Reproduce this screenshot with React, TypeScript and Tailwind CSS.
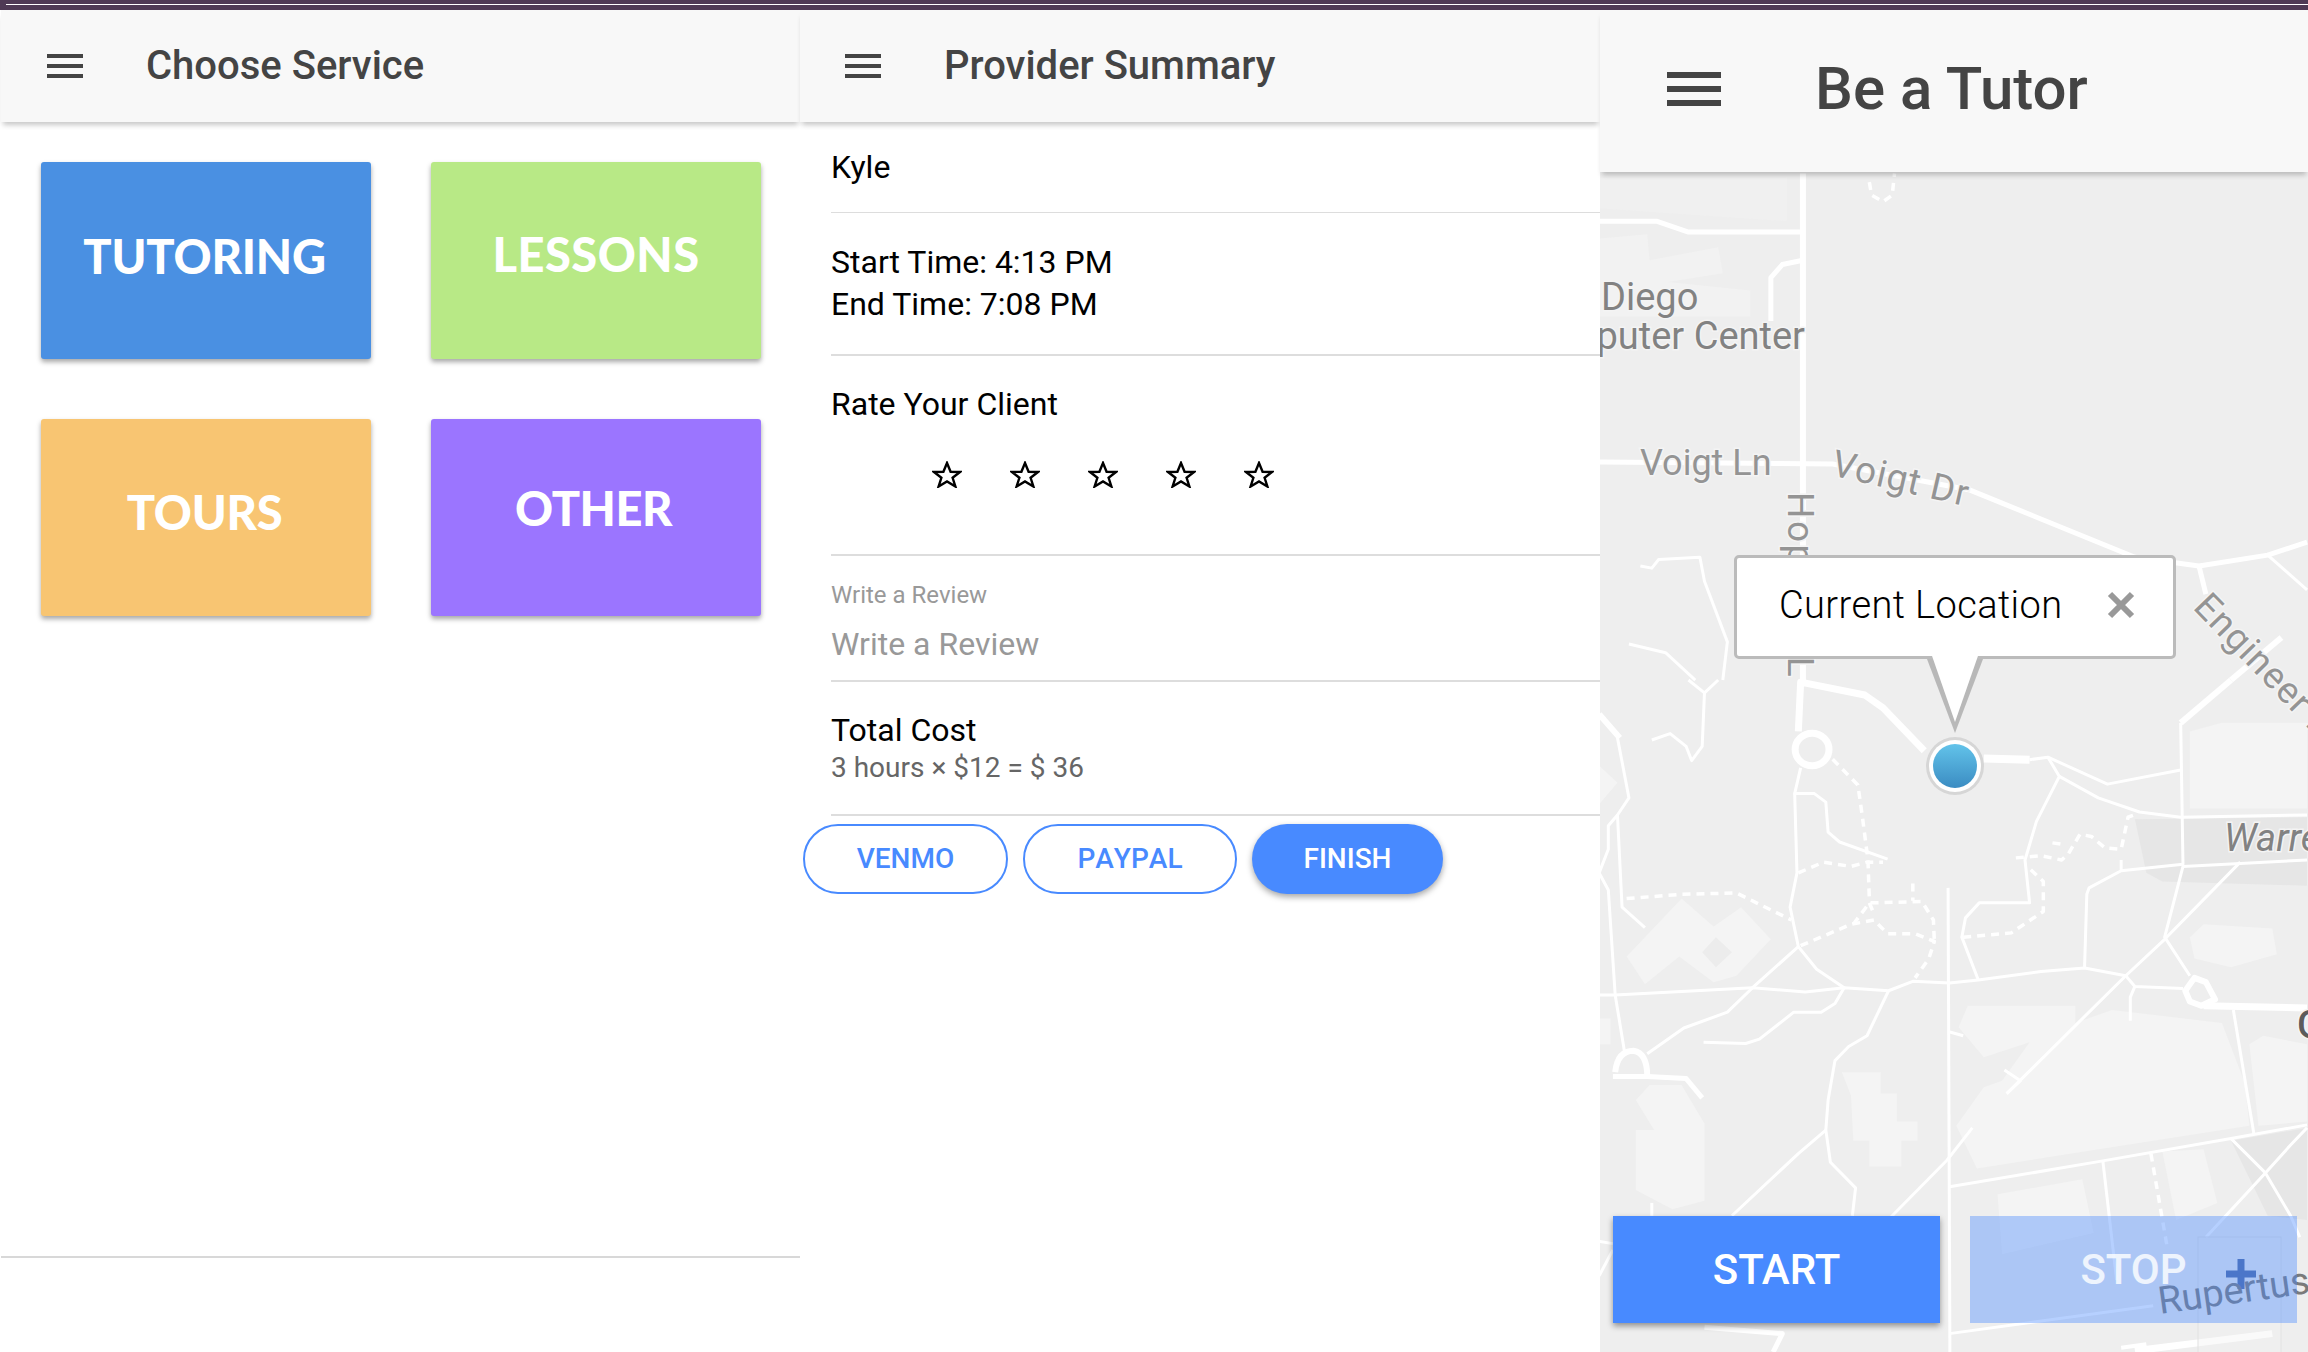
const cards = [
  { label: 'TUTORING', bg: 'bg-[#4a90e2]', nudge: 'pb-[9px] pr-[3px] tracking-[-0.2px]' },
  { label: 'LESSONS', bg: 'bg-[#b8e986]', nudge: 'pb-[13px] tracking-[0.5px]' },
  { label: 'TOURS', bg: 'bg-[#f8c572]', nudge: 'pb-[10px] pr-[3px] tracking-[-0.3px]' },
  { label: 'OTHER', bg: 'bg-[#9b75ff]', nudge: 'pb-[19px] pr-[5px] tracking-[-0.5px]' },
]

// map geometry, coordinates taken from two crops of the map
const thick: [string, number][] = [
  ['455,120 460,5 600,35 640,65 730,165', 7],
  ['860,183 960,186', 8],
  ['20,80 65,135', 6],
  ['1290,100 1400,0', 6],
  ['1340,760 1566,765', 7],
  ['50,925 125,925 210,930 245,975', 5],
  ['1190,1565 1490,1525', 7],
  ['250,1510 420,1525 400,1568', 5],
  ['1160,1558 1215,1550', 4],
]

const thin = [
  '960,186 1000,180 1130,243 1290,210',
  '1000,180 1025,225 975,330 950,420 960,520 850,520 820,555 812,600 848,700',
  '1025,225 1110,275 1200,308 1290,320 1566,315',
  '1290,100 1295,430 1160,445 1090,485 1085,500 1080,672',
  '1160,445 1160,420',
  '1566,420 1295,435 1255,600 1310,690',
  '1420,425 1255,605 1170,690 910,965',
  '1170,690 1080,672 985,680 848,700 785,707 705,703 652,725 555,718 470,728 355,718 55,735 20,735',
  '55,735 75,865',
  '60,135 85,275 60,315 70,530 120,578',
  '60,315 40,340 40,395 20,450 40,490 55,735',
  '135,140 175,125 210,155 222,188 245,155 250,30 215,0',
  '250,30 280,0',
  '445,265 490,265 515,285 520,355 545,378 650,418',
  '460,205 447,265 452,450 437,530 455,622 495,675 555,718 535,755 505,775 445,775 370,838 340,848 248,845',
  '455,622 355,718 300,775 205,812 125,872',
  '652,725 605,830 565,855 535,888 520,980 515,1050 525,1125 580,1185 573,1250',
  '515,1050 455,1105 310,1250',
  '782,485 786,1568',
  '782,820 815,830',
  '905,910 940,935 910,965',
  '835,1045 780,1120 660,1250 520,1400',
  '782,1183 1120,1122 1400,1070 1566,1038',
  '1120,1122 1150,1400',
  '1400,1070 1475,1150 1530,1250 1550,1300',
  '1566,1045 1530,1085 1475,1150 1345,1300',
  '1405,770 1450,1060',
  '1190,715 1180,740 1180,795',
  '1170,690 1190,715 1295,720',
  '785,1525 1230,1460',
  '20,1310 50,1315',
  '20,1390 50,1330',
  '135,1220 135,1250',
]

const dashed = [
  '530,185 585,245 595,320 607,420 610,510',
  '455,450 510,425 570,435 605,425 640,425',
  '80,510 200,500 320,497 440,560',
  '460,620 570,570 620,560 650,592 710,592 752,610 740,650 710,695',
  '575,570 610,520 725,517 750,560 752,610',
  '610,520 620,545',
  '705,475 705,515',
  '815,600 920,590 990,540 990,470 960,440',
  '930,415 985,410 1030,420 1045,405 1070,360 1095,365 1125,392 1160,395 1175,320 1195,312',
  '1010,380 1040,385',
  '1225,1105 1260,1320',
]

const buildings = [
  '80,645 200,510 270,575 330,530 395,605 320,690 270,705 195,645 120,710',
  '800,1040 860,950 900,935 960,845 860,880 805,810 825,760 1060,760 1060,800 1140,770 1380,800 1430,940 1440,1040 1020,1110 845,1140',
  '1310,120 1380,100 1566,100 1566,300 1310,300',
  '1310,600 1340,570 1490,580 1500,640 1400,670 1320,650',
  '550,915 635,915 635,965 670,965 670,1030 715,1030 715,1075 680,1075 680,1135 610,1135 610,1075 575,1075 570,970',
  '100,1050 140,1050 100,980 130,945 200,945 250,1035 250,1215 180,1235 100,1190',
  '1250,1100 1340,1095 1370,1220 1280,1260',
  '890,1200 1075,1165 1100,1290 900,1340',
  '1440,850 1470,830 1566,850 1566,1030 1460,1040',
  '20,200 60,240 20,290',
  '20,790 45,790 45,850 20,850',
]

function Burger({ big }: { big?: boolean }) {
  return (
    <div className={big ? 'flex w-[54px] flex-col gap-[8px]' : 'flex w-9 flex-col gap-[6px]'}>
      <div className={big ? 'h-[6px] bg-[#444444]' : 'h-1 bg-[#444444]'} />
      <div className={big ? 'h-[6px] bg-[#444444]' : 'h-1 bg-[#444444]'} />
      <div className={big ? 'h-[6px] bg-[#444444]' : 'h-1 bg-[#444444]'} />
    </div>
  )
}

function Star() {
  return (
    <svg width="30" height="27" viewBox="0 0 30 27">
      <polygon
        points="15,2 18.6,10.8 28,11 20.6,16.8 23.4,25.5 15,20.4 6.6,25.5 9.4,16.8 2,11 11.4,10.8"
        fill="none"
        stroke="#000"
        strokeWidth="2.4"
      />
    </svg>
  )
}

function MapLayer() {
  return (
    <svg className="absolute inset-0" width="708" height="1180" viewBox="1600 172 708 1180">
      <defs>
        <linearGradient id="dot" x1="0" y1="0" x2="0" y2="1">
          <stop offset="0" stopColor="#62c3ea" />
          <stop offset="1" stopColor="#3b8cc2" />
        </linearGradient>
      </defs>
      <rect x="1600" y="172" width="708" height="1180" fill="#eeeeee" />

      {/* lower crop */}
      <g transform="translate(1590 680) scale(0.4579 0.4286)" fill="none" strokeLinejoin="round">
        <polygon points="1190,325 1566,320 1566,480 1250,470 1215,450" fill="#e6e6e6" />
        <polygon points="1400,1075 1566,1045 1566,1260 1480,1250" fill="#e6e6e6" />
        {buildings.map((p) => (
          <polygon key={p} points={p} fill="#f4f4f4" />
        ))}
        <polygon points="245,635 275,600 310,635 275,670" fill="#ececec" />
        {thin.map((p) => (
          <polyline key={p} points={p} stroke="#ffffff" strokeWidth="3" vectorEffect="non-scaling-stroke" />
        ))}
        {dashed.map((p) => (
          <polyline key={p} points={p} stroke="#ffffff" strokeWidth="3.5" strokeDasharray="8 6" vectorEffect="non-scaling-stroke" />
        ))}
        {thick.map(([p, w]) => (
          <polyline key={p} points={p} stroke="#ffffff" strokeWidth={w} vectorEffect="non-scaling-stroke" />
        ))}
        <polygon points="1300,725 1320,695 1345,705 1365,745 1335,760 1310,750" stroke="#ffffff" strokeWidth="6" vectorEffect="non-scaling-stroke" />
        <path d="M55,915 Q60,865 95,865 Q125,870 125,925" stroke="#ffffff" strokeWidth="6" vectorEffect="non-scaling-stroke" />
        <ellipse cx="485" cy="162" rx="37" ry="38" stroke="#ffffff" strokeWidth="7" vectorEffect="non-scaling-stroke" />
      </g>

      {/* upper crop */}
      <g transform="translate(1590 0) scale(0.4579 0.4337)" fill="none" stroke="#ffffff" strokeLinejoin="round">
        <polygon points="20,410 430,410 430,510 150,490 20,480" fill="#f0f0f0" stroke="none" />
        <polygon points="20,550 125,540 130,600 280,570 290,630 170,650 350,670 350,730 20,730" fill="#f2f2f2" stroke="none" />
        <polyline points="465,400 465,1568" strokeWidth="6" vectorEffect="non-scaling-stroke" />
        <polyline points="20,510 145,510 215,535 465,535" strokeWidth="5" vectorEffect="non-scaling-stroke" />
        <polyline points="465,600 420,610 395,640 395,740" strokeWidth="5" vectorEffect="non-scaling-stroke" />
        <polyline points="20,1065 530,1070 830,1130 1190,1285 1330,1305 1480,1280 1566,1250" strokeWidth="5" vectorEffect="non-scaling-stroke" />
        <polyline points="1330,1305 1345,1370" strokeWidth="5" vectorEffect="non-scaling-stroke" />
        <polyline points="1480,1280 1566,1360" strokeWidth="3" vectorEffect="non-scaling-stroke" />
        <polyline points="110,1305 135,1310 150,1290 240,1285 250,1340 300,1480 290,1568" strokeWidth="3" vectorEffect="non-scaling-stroke" />
        <polyline points="85,1485 165,1505 230,1568" strokeWidth="3" vectorEffect="non-scaling-stroke" />
        <polyline points="1400,1568 1510,1470" strokeWidth="6" vectorEffect="non-scaling-stroke" />
        <polyline points="610,420 615,450 640,465 660,450 665,400" strokeWidth="3.5" strokeDasharray="8 6" vectorEffect="non-scaling-stroke" />
      </g>

      {/* labels */}
      <g className="font-['Roboto',sans-serif]" fill="#828282" stroke="#f4f4f4" strokeWidth="3" style={{ paintOrder: 'stroke' }}>
        <text x="1601" y="310" fontSize="38">Diego</text>
        <text x="1805" y="349" fontSize="38" textAnchor="end">Computer Center</text>
        <text x="1640" y="475" fontSize="36" fill="#949494">Voigt Ln</text>
        <text transform="translate(1830 475) rotate(13)" fontSize="37" fill="#949494" letterSpacing="1">Voigt Dr</text>
        <text transform="translate(1788 492) rotate(90)" fontSize="37" fill="#949494" letterSpacing="2.5">Hopkins L</text>
        <text transform="translate(2192 608) rotate(46)" fontSize="37" fill="#949494" letterSpacing="1">Engineer Ln</text>
        <text x="2224" y="851" fontSize="38" fontStyle="italic">Warren</text>
        <text x="2297" y="1038" fontSize="38" fontWeight="500" fill="#5c5c5c">G</text>
      </g>

      {/* zoom control, shows through the stop button */}
      <rect x="2198" y="1237" width="83" height="130" fill="#f0f0f0" fillOpacity="0.35" stroke="#e2e2e2" />
      <path d="M2241 1259 V1289 M2226 1274 H2256" stroke="#4d6aa5" strokeWidth="7" />
      <text transform="translate(2160 1314) rotate(-8)" className="font-['Roboto',sans-serif]" fontSize="38" fill="#7a7a7a">Rupertus</text>

      {/* location dot */}
      <circle cx="1955" cy="766" r="29" fill="#d6d6d6" />
      <circle cx="1955" cy="766" r="26" fill="#ffffff" />
      <circle cx="1955" cy="766" r="22" fill="url(#dot)" />
    </svg>
  )
}

export default function App() {
  return (
    <div className="flex h-[1352px] w-[2308px] flex-col overflow-hidden bg-white font-['Roboto',sans-serif]">
      <div className="h-[10px] bg-[#4f3a55] pl-[6px] pt-1">
        <div className="h-px bg-white" />
      </div>

      <div className="flex flex-1">
        <section className="flex w-[800px] flex-col pl-px">
          <header className="relative z-10 flex h-[112px] items-center bg-[#f8f8f8] pl-[46px] text-[#444444] shadow-[0_5px_5px_-2px_rgba(0,0,0,0.22)]">
            <Burger />
            <h1 className="ml-[63px] text-[40px] font-medium">Choose Service</h1>
          </header>
          <div className="grid grid-cols-[330px_330px] gap-x-[60px] gap-y-[60px] pl-10 pt-10">
            {cards.map((c) => (
              <div
                key={c.label}
                className={`flex h-[197px] items-center justify-center rounded-[3px] font-['Lato',sans-serif] text-[47px] font-black text-white shadow-[0_3px_5px_rgba(0,0,0,0.35)] ${c.bg} ${c.nudge}`}
              >
                {c.label}
              </div>
            ))}
          </div>
          <div className="mb-[94px] mt-auto h-[2px] bg-[#d8d8d8]" />
        </section>

        <section className="flex w-[800px] flex-col">
          <header className="relative z-10 flex h-[112px] items-center bg-[#f8f8f8] pl-[45px] text-[#444444] shadow-[0_5px_5px_-2px_rgba(0,0,0,0.22)]">
            <Burger />
            <h1 className="ml-[63px] text-[40px] font-medium">Provider Summary</h1>
          </header>
          <div className="ml-[31px] flex h-[91px] items-center border-b border-[#dddddd] text-[32px] text-black">Kyle</div>
          <div className="ml-[31px] h-[143px] border-b-2 border-[#dddddd] pt-7 text-[32px] leading-[42px] text-black">
            <div>Start Time: 4:13 PM</div>
            <div>End Time: 7:08 PM</div>
          </div>
          <div className="ml-[31px] h-[200px] border-b-2 border-[#dddddd] pt-[29px] text-[32px] leading-[38px] text-black">
            <div>Rate Your Client</div>
            <div className="ml-[101px] mt-[38px] flex gap-12">
              <Star />
              <Star />
              <Star />
              <Star />
              <Star />
            </div>
          </div>
          <div className="ml-[31px] h-[126px] border-b-2 border-[#dddddd] pt-6 text-[#999999]">
            <div className="text-[24px] leading-[30px]">Write a Review</div>
            <div className="mt-[15px] text-[32px] leading-[38px]">Write a Review</div>
          </div>
          <div className="ml-[31px] h-[134px] border-b-2 border-[#dddddd] pt-[29px]">
            <div className="text-[32px] leading-[38px] text-black">Total Cost</div>
            <div className="text-[28px] leading-[38px] text-[#666666]">3 hours × $12 = $ 36</div>
          </div>
          <div className="ml-[3px] mt-2 flex gap-[15px] text-[28px] font-medium">
            <button className="h-[70px] w-[205px] rounded-[35px] border-2 border-[#488aff] text-[#488aff]">VENMO</button>
            <button className="h-[70px] w-[214px] rounded-[35px] border-2 border-[#488aff] text-[#488aff] [font-kerning:none]">PAYPAL</button>
            <button className="h-[70px] w-[191px] rounded-[35px] bg-[#488aff] text-white shadow-[0_3px_6px_rgba(0,0,0,0.35)]">FINISH</button>
          </div>
        </section>

        <section className="flex flex-1 flex-col">
          <header className="relative z-10 flex h-[162px] items-center bg-[#f8f8f8] pb-[5px] pl-[67px] text-[#444444] shadow-[0_5px_5px_-2px_rgba(0,0,0,0.22)]">
            <Burger big />
            <h1 className="ml-[94px] text-[60px] font-medium">Be a Tutor</h1>
          </header>
          <div className="relative flex-1 overflow-hidden">
            <MapLayer />

            <div className="absolute left-[134px] top-[383px] flex h-[104px] w-[442px] items-center justify-between rounded-[5px] border-[3px] border-[#bbbbbb] bg-white pb-1 pl-[42px] pr-[38px] text-[38px] font-light tracking-[0.4px] text-black">
              <span>Current Location</span>
              <svg width="28" height="28" viewBox="0 0 28 28">
                <path d="M3 3 L25 25 M25 3 L3 25" stroke="#999999" strokeWidth="6" />
              </svg>
            </div>
            {/* popup tail sits over the popup's bottom border */}
            <svg className="absolute left-[325px] top-[481px]" width="60" height="82" viewBox="0 0 60 82">
              <polygon points="2,6 58,6 30,80" fill="#8c8c8c" fillOpacity="0.55" />
              <polygon points="6,0 54,0 30,69" fill="#ffffff" />
            </svg>

            <div className="absolute bottom-[29px] left-[13px] flex gap-[30px] text-[42px] text-white">
              <button className="h-[107px] w-[327px] bg-[#488aff] font-medium shadow-[0_3px_6px_rgba(0,0,0,0.4)]">START</button>
              <button className="h-[107px] w-[327px] bg-[#488aff]/40 font-medium text-white/80">STOP</button>
            </div>
          </div>
        </section>
      </div>
    </div>
  )
}
